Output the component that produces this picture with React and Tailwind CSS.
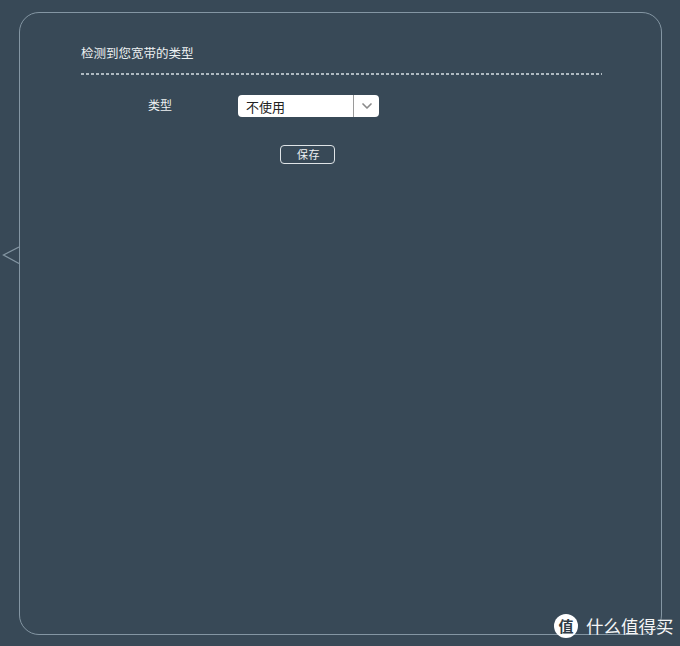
import React from "react";
import { LuChevronDown } from "react-icons/lu";

const font = { fontFamily: '"Noto Sans CJK SC", "Liberation Sans", sans-serif' };

function App() {
	return (
		<div className="w-[680px] h-[646px] bg-[#384957] pt-3 pl-[19px] overflow-hidden" style={font}>
			<div className="relative w-[643px] h-[623px] border-[1.5px] border-[#8496a3] rounded-[20px] pt-[32px] pl-[61px] pr-[59px]">
				{/* notch on the left edge */}
				<svg className="absolute left-[-18px] top-[232px]" width="18" height="20" viewBox="0 0 18 20" fill="none">
					<path d="M17 2 L1.5 10 L17 18.5" stroke="#8496a3" strokeWidth="1.3" />
				</svg>

				<div className="text-[12.5px] leading-[16px] text-[#eef1f2] pb-[12px]">检测到您宽带的类型</div>
				<div className="h-[2px] bg-[repeating-linear-gradient(90deg,#aeb9c0_0,#aeb9c0_3px,transparent_3px,transparent_5px)]" />

				<div className="flex items-center mt-[20px]">
					<div className="w-[157px] pl-[67px] pb-[2px] text-[12px] leading-[16px] text-[#eef1f2]">类型</div>
					<div className="flex w-[141px] h-[22px] bg-white rounded-[4px] overflow-hidden">
						<div className="flex-1 pl-[8px] pt-[3px] text-[13px] leading-[18px] text-[#222222]">不使用</div>
						<div className="w-[26px] border-l border-[#9a9a9a] flex items-center justify-center text-[#8a8a8a]">
							<LuChevronDown size={16} strokeWidth={2.5} />
						</div>
					</div>
				</div>

				<div className="mt-[28px] ml-[199px] w-[55px] h-[19px] pl-[2px] border border-[#dfe4e7] rounded-[4px] flex items-center justify-center text-[11px] tracking-[0.5px] text-[#eef1f3]">
					保存
				</div>

				{/* watermark */}
				<div className="absolute left-[534px] top-[601px] flex items-center gap-[8px]">
					<div className="w-[24px] h-[24px] rounded-full bg-white flex items-center justify-center text-[15px] font-bold text-[#2d3a45]">
						值
					</div>
					<div className="text-[17.5px] leading-[24px] text-[#f4f5f6] whitespace-nowrap">什么值得买</div>
				</div>
			</div>
		</div>
	);
}

export default App;
